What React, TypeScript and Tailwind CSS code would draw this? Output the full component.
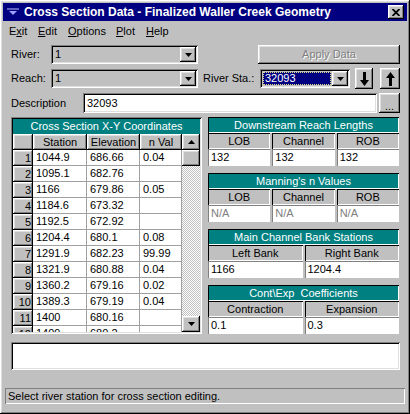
import React from 'react';

const raised =
  'shadow-[inset_-1px_-1px_#000,inset_1px_1px_#fff,inset_-2px_-2px_#808080,inset_2px_2px_#dfdfdf]';
const sunken =
  'shadow-[inset_1px_1px_#808080,inset_-1px_-1px_#fff,inset_2px_2px_#000,inset_-2px_-2px_#dfdfdf]';
const thin = 'shadow-[inset_1px_1px_#808080,inset_-1px_-1px_#fff]';
const etched = 'shadow-[inset_1px_1px_#000,inset_-1px_-1px_#fff]';

const rows = [
  ['1044.9', '686.66', '0.04'],
  ['1095.1', '682.76', ''],
  ['1166', '679.86', '0.05'],
  ['1184.6', '673.32', ''],
  ['1192.5', '672.92', ''],
  ['1204.4', '680.1', '0.08'],
  ['1291.9', '682.23', '99.99'],
  ['1321.9', '680.88', '0.04'],
  ['1360.2', '679.16', '0.02'],
  ['1389.3', '679.19', '0.04'],
  ['1400', '680.16', ''],
  ['1409', '680.2', ''],
];

function DropArrow({ up = false }: { up?: boolean }) {
  return (
    <svg width="7" height="4" viewBox="0 0 7 4">
      <path d={up ? 'M0 4h7L3.5 0z' : 'M0 0h7L3.5 4z'} fill="#000" />
    </svg>
  );
}

function BigArrow({ up = false }: { up?: boolean }) {
  return (
    <svg width="9" height="14" viewBox="0 0 9 14">
      <path
        d={up ? 'M4.5 0L9 6H6V14H3V6H0z' : 'M3 0H6V8H9L4.5 14L0 8H3z'}
        fill="#000"
      />
    </svg>
  );
}

function Combo({
  width,
  children,
}: {
  width: string;
  children: React.ReactNode;
}) {
  return (
    <div className={`flex h-[19px] items-stretch p-[2px] ${width} ${sunken}`}>
      <div className="flex flex-1 items-center overflow-hidden">{children}</div>
      <div className={`flex w-[16px] items-center justify-center bg-[#c0c0c0] ${raised}`}>
        <DropArrow />
      </div>
    </div>
  );
}

function Group({
  title,
  labels,
  values,
  cols,
  gray = false,
}: {
  title: string;
  labels: string[];
  values: string[];
  cols: string;
  gray?: boolean;
}) {
  return (
    <div className="flex flex-col">
      <div
        className={`h-[16px] whitespace-pre bg-[#008080] text-center leading-[16px] text-white ${etched}`}
      >
        {title}
      </div>
      <div className={`grid ${cols} gap-[2px]`}>
        {labels.map((l) => (
          <div key={l} className={`h-[16px] text-center leading-[16px] ${etched}`}>
            {l}
          </div>
        ))}
      </div>
      <div className={`grid ${cols} gap-[2px]`}>
        {values.map((v, i) => (
          <div
            key={i}
            className={`h-[17px] bg-white pl-[3px] leading-[17px] ${thin} ${
              gray ? 'text-[#808080]' : 'text-black'
            }`}
          >
            {v}
          </div>
        ))}
      </div>
    </div>
  );
}

export default function App() {
  return (
    <div
      className={`flex h-[414px] w-[410px] flex-col bg-[#c0c0c0] p-[3px] font-['Liberation_Sans',Arial,sans-serif] text-[11px] text-black ${raised}`}
    >
      {/* title bar */}
      <div className="flex h-[18px] items-center bg-[#000080]">
        <svg width="12" height="8" viewBox="0 0 12 8" className="ml-[4px]">
          <path d="M0 1h12" stroke="#c0c0ff" strokeWidth="1" />
          <path d="M2 3h8L6 7z" fill="#a0a0ff" />
        </svg>
        <span className="ml-[5px] text-[12px] font-bold text-white">
          Cross Section Data - Finalized Waller Creek Geometry
        </span>
        <div
          className={`ml-auto mr-[3px] flex h-[14px] w-[16px] items-center justify-center bg-[#c0c0c0] ${raised}`}
        >
          <svg width="8" height="7" viewBox="0 0 8 7">
            <path d="M0.5 0L7.5 7M7.5 0L0.5 7" stroke="#000" strokeWidth="1.8" />
          </svg>
        </div>
      </div>

      {/* menu */}
      <div className="flex h-[19px] items-center pl-[6px] pt-[1px]">
        <span className="w-[29px]">
          E<span className="underline">x</span>it
        </span>
        <span className="w-[30px]">
          <span className="underline">E</span>dit
        </span>
        <span className="w-[48px]">
          <span className="underline">O</span>ptions
        </span>
        <span className="w-[30px]">
          <span className="underline">P</span>lot
        </span>
        <span>
          <span className="underline">H</span>elp
        </span>
      </div>

      <div className="flex flex-col pl-[8px]">
        {/* river row */}
        <div className="mt-[5px] flex h-[19px] items-center">
          <span className="w-[40px]">River:</span>
          <Combo width="w-[147px]">
            <span className="pl-[2px]">1</span>
          </Combo>
          <div
            className={`ml-[60px] flex h-[19px] w-[142px] items-center justify-center bg-[#c0c0c0] text-[#808080] [text-shadow:1px_1px_0_#fff] ${raised}`}
          >
            Apply Data
          </div>
        </div>

        {/* reach row */}
        <div className="mt-[5px] flex h-[19px] items-center">
          <span className="w-[40px]">Reach:</span>
          <Combo width="w-[147px]">
            <span className="pl-[2px]">1</span>
          </Combo>
          <span className="ml-[5px] w-[57px]">River Sta.:</span>
          <Combo width="w-[90px]">
            <div className="m-[1px] flex h-[13px] flex-1 items-center border border-dotted border-[#e0e080] bg-[#000080] pl-[1px] text-white">
              32093
            </div>
          </Combo>
          <div
            className={`ml-[5px] flex h-[21px] w-[18px] shrink-0 items-center justify-center bg-[#c0c0c0] ${raised}`}
          >
            <BigArrow />
          </div>
          <div
            className={`ml-[7px] flex h-[21px] w-[20px] shrink-0 items-center justify-center bg-[#c0c0c0] ${raised}`}
          >
            <BigArrow up />
          </div>
        </div>

        {/* description row */}
        <div className="mt-[5px] flex h-[20px] items-center">
          <span className="w-[72px]">Description</span>
          <div className={`flex h-[20px] w-[294px] items-center bg-white pl-[4px] ${sunken}`}>
            32093
          </div>
          <div
            className={`ml-[2px] flex h-[20px] w-[21px] items-end justify-center bg-[#c0c0c0] pb-[2px] leading-[10px] ${raised}`}
          >
            ...
          </div>
        </div>

        {/* main area */}
        <div className="mt-[4px] flex h-[217px]">
          {/* XY table */}
          <div className={`flex h-[217px] w-[191px] flex-col p-[2px] ${sunken}`}>
            <div className="h-[15px] bg-[#008080] text-center leading-[15px] text-white">
              Cross Section X-Y Coordinates
            </div>
            <div className="flex flex-1 overflow-hidden">
              <div className="flex w-[169px] flex-col overflow-hidden">
                <div className="grid h-[16px] shrink-0 grid-cols-[20px_54px_53px_42px]">
                  <div className={`bg-[#c0c0c0] ${raised}`} />
                  <div className={`bg-[#c0c0c0] text-center leading-[16px] ${raised}`}>Station</div>
                  <div className={`bg-[#c0c0c0] text-center leading-[16px] ${raised}`}>Elevation</div>
                  <div className={`bg-[#c0c0c0] text-center leading-[16px] ${raised}`}>n Val</div>
                </div>
                {rows.map((r, i) => (
                  <div key={i} className="grid h-[16px] shrink-0 grid-cols-[20px_54px_53px_42px]">
                    <div className={`bg-[#c0c0c0] pr-[2px] text-right leading-[16px] ${raised}`}>
                      {i + 1}
                    </div>
                    {r.map((c, j) => (
                      <div
                        key={j}
                        className="border-b border-r border-[#a0a0a0] bg-white pl-[3px] leading-[15px]"
                      >
                        {c}
                      </div>
                    ))}
                  </div>
                ))}
              </div>
              <div className="flex w-[18px] flex-col">
                <div className={`flex h-[16px] items-center justify-center bg-[#c0c0c0] ${raised}`}>
                  <DropArrow up />
                </div>
                <div className={`h-[16px] bg-[#c0c0c0] ${raised}`} />
                <div className="flex-1 bg-[length:2px_2px] bg-[image:repeating-conic-gradient(#fff_0_25%,#c0c0c0_0_50%)]" />
                <div className={`flex h-[16px] items-center justify-center bg-[#c0c0c0] ${raised}`}>
                  <DropArrow />
                </div>
              </div>
            </div>
          </div>

          {/* right panels */}
          <div className="ml-[6px] flex w-[191px] flex-col gap-[7px]">
            <Group
              title="Downstream Reach Lengths"
              labels={['LOB', 'Channel', 'ROB']}
              values={['132', '132', '132']}
              cols="grid-cols-3"
            />
            <Group
              title="Manning's n Values"
              labels={['LOB', 'Channel', 'ROB']}
              values={['N/A', 'N/A', 'N/A']}
              cols="grid-cols-3"
              gray
            />
            <Group
              title="Main Channel Bank Stations"
              labels={['Left Bank', 'Right Bank']}
              values={['1166', '1204.4']}
              cols="grid-cols-2"
            />
            <Group
              title="Cont\Exp  Coefficients"
              labels={['Contraction', 'Expansion']}
              values={['0.1', '0.3']}
              cols="grid-cols-2"
            />
          </div>
        </div>

        {/* message box */}
        <div className={`mt-[8px] h-[28px] w-[389px] bg-white ${sunken}`} />
      </div>

      {/* status bar */}
      <div className={`mx-[2px] mt-[18px] flex h-[16px] items-center pl-[3px] ${thin}`}>
        Select river station for cross section editing.
      </div>
    </div>
  );
}
